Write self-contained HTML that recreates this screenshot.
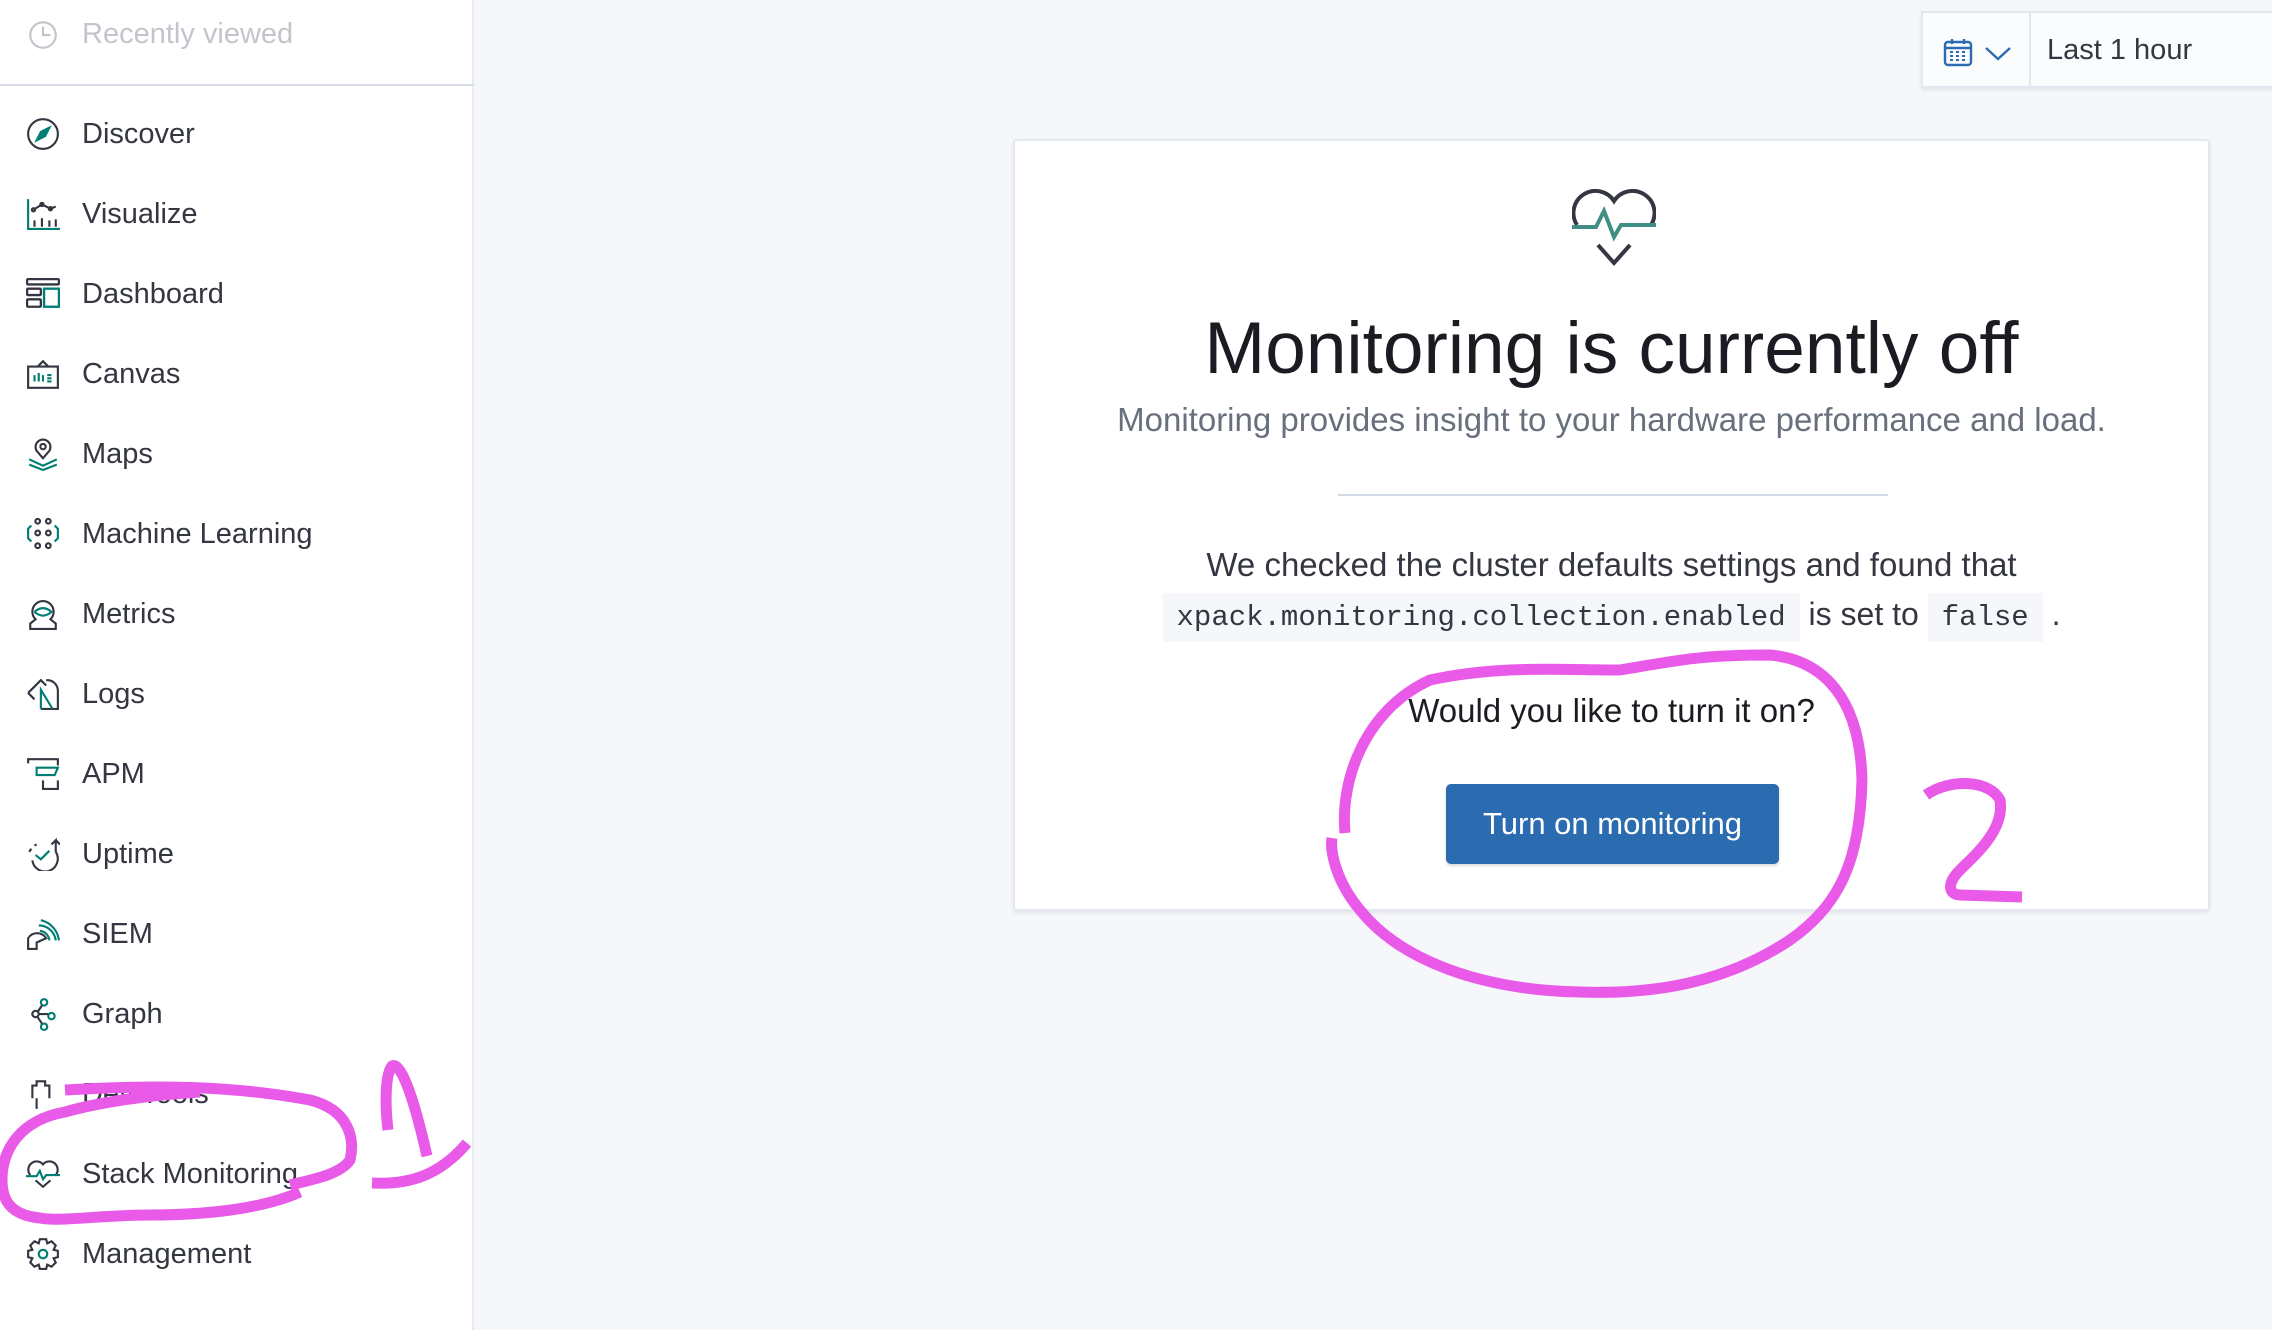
<!DOCTYPE html>
<html><head><meta charset="utf-8"><style>
*{margin:0;padding:0;box-sizing:border-box}
body{width:2272px;height:1330px;background:#f5f7fa;font-family:"Liberation Sans",sans-serif;color:#343741;position:relative;overflow:hidden}
#side{position:absolute;left:0;top:0;width:474px;height:1330px;background:#fff;border-right:2px solid #e9ecf2}
.it{position:absolute;left:82px;font-size:29px;line-height:36px;color:#343741}
.ic{position:absolute;left:26px;width:34px;height:34px}
#recent{position:absolute;left:82px;top:18px;font-size:29px;color:#c2c5cb}
#hr{position:absolute;left:0;top:84px;width:474px;height:2px;background:#d8dde8}
#dp{position:absolute;left:1921px;top:11px;width:360px;height:77px;background:#fbfcfd;border:2px solid #e3e7ef;box-shadow:0 2px 3px rgba(0,0,0,.08)}
#card{position:absolute;left:1013px;top:139px;width:1197px;height:772px;background:#fff;border:2px solid #e3e7ef;border-radius:4px;box-shadow:0 2px 4px rgba(0,0,0,.08)}
.c{position:absolute;left:0;width:100%;text-align:center;white-space:nowrap}
code{font-family:"Liberation Mono",monospace;background:#f5f7fa;padding:8px 14px;font-size:29px;color:#343741}
#btn{position:absolute;left:431px;top:643px;width:333px;height:80px;background:#2b6cb0;border-radius:5px;color:#fff;font-size:31px;line-height:80px;text-align:center;box-shadow:0 2px 3px rgba(0,0,0,.15)}
</style></head><body>
<div id="side">
<svg class="ic" style="top:18px" viewBox="0 0 32 32" fill="none" stroke="#c2c5cb" stroke-width="2"><circle cx="16" cy="16" r="12"/><path d="M16 8v8h7"/></svg>
<div id="recent">Recently viewed</div>
<div id="hr"></div>

<svg class="ic" style="top:117px" viewBox="0 0 32 32" fill="none" stroke="#343741" stroke-width="2"><circle cx="16" cy="16" r="14"/><path d="M10 22l4-8 8-4-4 8z" stroke="#017d73" fill="#017d73"/></svg>
<div class="it" style="top:116px">Discover</div>
<svg class="ic" style="top:197px" viewBox="0 0 32 32" fill="none" stroke="#343741" stroke-width="2"><path d="M2 2v28h30" stroke="#017d73"/><path d="M8 28v-6M15 28v-8M22 28v-6M28 28v-7"/><path d="M7 12l8-5 8 4 5-2"/><circle cx="7" cy="12" r="1.5"/><circle cx="15" cy="7" r="1.5"/><circle cx="23" cy="11" r="1.5"/></svg>
<div class="it" style="top:196px">Visualize</div>
<svg class="ic" style="top:277px" viewBox="0 0 32 32" fill="none" stroke="#343741" stroke-width="2.2"><rect x="1" y="2" width="30" height="5" rx="1"/><rect x="1" y="11" width="13" height="6" rx="1"/><rect x="1" y="21" width="13" height="7" rx="1"/><rect x="17" y="11" width="14" height="17" stroke="#017d73"/></svg>
<div class="it" style="top:276px">Dashboard</div>
<svg class="ic" style="top:357px" viewBox="0 0 32 32" fill="none" stroke="#343741" stroke-width="2"><path d="M2 9h28v20H2zM11 9l5-5 5 5"/><path d="M8 23v-6M12 23v-8M16 23v-6M20 17h4M20 20h4M20 23h4" stroke="#017d73"/></svg>
<div class="it" style="top:356px">Canvas</div>
<svg class="ic" style="top:437px" viewBox="0 0 32 32" fill="none" stroke="#343741" stroke-width="2"><path d="M16 20l-6-7a7 7 0 1 1 12 0z"/><circle cx="16" cy="9" r="2.5"/><path d="M3 21l13 6 13-6M3 26l13 5 13-5" stroke="#017d73"/></svg>
<div class="it" style="top:436px">Maps</div>
<svg class="ic" style="top:517px" viewBox="0 0 32 32" fill="none" stroke="#343741" stroke-width="2"><circle cx="11" cy="4" r="2.2"/><circle cx="21" cy="4" r="2.2"/><circle cx="11" cy="15" r="2.2"/><circle cx="21" cy="15" r="2.2"/><circle cx="11" cy="27" r="2.2"/><circle cx="21" cy="27" r="2.2"/><path d="M5 8L2 11v9l3 3M27 8l3 3v9l-3 3" stroke="#017d73"/></svg>
<div class="it" style="top:516px">Machine Learning</div>
<svg class="ic" style="top:597px" viewBox="0 0 32 32" fill="none" stroke="#343741" stroke-width="2"><path d="M4 30v-5l5-4a10 10 0 1 1 14 0l5 4v5z"/><path d="M8 14q8-7 16 0q-8 7-16 0" stroke="#017d73"/></svg>
<div class="it" style="top:596px">Metrics</div>
<svg class="ic" style="top:677px" viewBox="0 0 32 32" fill="none" stroke="#343741" stroke-width="2"><path d="M2 15L14 3l5 5M2 15l6 6M19 3h2a10 10 0 0 1 9 10v17h-16"/><path d="M14 30V12l11 18" stroke="#017d73"/></svg>
<div class="it" style="top:676px">Logs</div>
<svg class="ic" style="top:757px" viewBox="0 0 32 32" fill="none" stroke="#343741" stroke-width="2"><path d="M2 6V2h28v6M8 8v0"/><path d="M10 10h20l-3 7H10z" stroke="#017d73"/><path d="M16 22v8h14v-8"/></svg>
<div class="it" style="top:756px">APM</div>
<svg class="ic" style="top:837px" viewBox="0 0 32 32" fill="none" stroke="#343741" stroke-width="2"><path d="M28 14a12 12 0 1 1-22 8" /><path d="M3 14l2-3M8 8l2-1" /><path d="M9 17l5 4 8-8" stroke="#017d73"/><path d="M28 14V3l-4 4M28 3l4 4"/></svg>
<div class="it" style="top:836px">Uptime</div>
<svg class="ic" style="top:917px" viewBox="0 0 32 32" fill="none" stroke="#343741" stroke-width="2"><path d="M2 30V20a10 10 0 0 1 17 0l-9 4v6z"/><path d="M12 8a16 16 0 0 1 16 14M14 3a22 22 0 0 1 17 19M13 13a10 10 0 0 1 9 9" stroke="#017d73"/></svg>
<div class="it" style="top:916px">SIEM</div>
<svg class="ic" style="top:997px" viewBox="0 0 32 32" fill="none" stroke="#343741" stroke-width="2"><circle cx="17" cy="5" r="3" stroke="#017d73"/><circle cx="9" cy="16" r="3"/><circle cx="24" cy="18" r="3" stroke="#017d73"/><circle cx="17" cy="28" r="3" stroke="#017d73"/><path d="M12 16h9M5 16h1M11 14l4-6M11 19l4 6"/></svg>
<div class="it" style="top:996px">Graph</div>
<svg class="ic" style="top:1077px" viewBox="0 0 32 32" fill="none" stroke="#343741" stroke-width="2"><path d="M6 20V8h4V4h8v4h4v12M10 20v10"/></svg>
<div class="it" style="top:1076px">Dev Tools</div>
<svg class="ic" style="top:1157px" viewBox="0 0 32 32" fill="none" stroke="#343741" stroke-width="2"><path d="M4 17a7 7 0 0 1 12-10a7 7 0 0 1 12 10"/><path d="M0 18h10l3-5 3 8 3-4h13" stroke="#017d73"/><path d="M9 22l7 6 7-6"/></svg>
<div class="it" style="top:1156px">Stack Monitoring</div>
<svg class="ic" style="top:1237px" viewBox="0 0 32 32" fill="none" stroke="#343741" stroke-width="2"><path d="M13 2h6l1 4 4-2 4 4-2 4 4 1v6l-4 1 2 4-4 4-4-2-1 4h-6l-1-4-4 2-4-4 2-4-4-1v-6l4-1-2-4 4-4 4 2z"/><circle cx="16" cy="16" r="4" stroke="#017d73"/></svg>
<div class="it" style="top:1236px">Management</div>
</div>

<div id="dp">
<svg style="position:absolute;left:20px;top:24px" width="30" height="30" viewBox="0 0 30 30" fill="none" stroke="#2b6cb0" stroke-width="2.4"><rect x="2" y="5" width="26" height="23" rx="3"/><path d="M2 11h26M9 2v5M21 2v5"/><path d="M7 15h3M13 15h3M19 15h3M7 19h3M13 19h3M19 19h3M7 23h3M13 23h3M19 23h3" stroke-width="2"/></svg>
<svg style="position:absolute;left:61px;top:32px" width="28" height="16" viewBox="0 0 28 16" fill="none" stroke="#2b6cb0" stroke-width="2.4"><path d="M2 3l12 11 12-11"/></svg>
<div style="position:absolute;left:106px;top:0;width:2px;height:75px;background:#e3e7ef"></div>
<div style="position:absolute;left:124px;top:21px;font-size:29px;color:#343741">Last 1 hour</div>
</div>

<div id="card">
<svg style="position:absolute;left:557px;top:48px" width="84" height="80" viewBox="0 0 84 80" fill="none" stroke="#343741" stroke-width="4"><path d="M5 36a17 17 0 0 1 37-24a17 17 0 0 1 37 24"/><path d="M0 38h24l8-16 10 26 7-12h35" stroke="#3f8f84"/><path d="M26 56l16 18 16-18"/></svg>
<div class="c" style="top:166px;font-size:73px;color:#1a1c21">Monitoring is currently off</div>
<div class="c" style="top:260px;font-size:33px;color:#69707d">Monitoring provides insight to your hardware performance and load.</div>
<div style="position:absolute;left:323px;top:353px;width:550px;height:2px;background:#d3dae6"></div>
<div class="c" style="top:405px;font-size:33px;color:#343741">We checked the cluster defaults settings and found that</div>
<div class="c" style="top:455px;font-size:32px;color:#343741"><code>xpack.monitoring.collection.enabled</code> is set to <code>false</code> .</div>
<div class="c" style="top:551px;font-size:33px;color:#1a1c21">Would you like to turn it on?</div>
<div id="btn">Turn on monitoring</div>
</div>

<svg style="position:absolute;left:0;top:0" width="2272" height="1330" fill="none" stroke="#e95ae9" stroke-width="11" stroke-linecap="butt" stroke-linejoin="round">
<path d="M1345 833C1340 780 1365 710 1430 680C1500 665 1560 670 1620 670C1680 660 1700 655 1770 655C1825 660 1860 700 1862 780C1860 860 1840 905 1790 940C1730 980 1660 995 1580 992C1480 990 1400 960 1360 910C1335 880 1330 850 1332 838"/>
<path d="M1926 795C1950 778 1990 780 2000 800C2005 830 1975 855 1960 870C1945 885 1950 895 1960 895L2022 897"/>
<path d="M65 1090C150 1085 230 1085 310 1100C350 1110 355 1140 350 1160C340 1175 310 1180 290 1185M300 1192C260 1210 200 1215 150 1215C100 1215 60 1222 40 1218C10 1215 2 1200 2 1180C2 1150 20 1120 65 1112C100 1102 150 1095 200 1092"/>
<path d="M388 1130C385 1105 385 1075 392 1066C400 1062 412 1090 427 1156"/>
<path d="M372 1183C410 1185 440 1175 467 1143"/>
</svg>
</body></html>
